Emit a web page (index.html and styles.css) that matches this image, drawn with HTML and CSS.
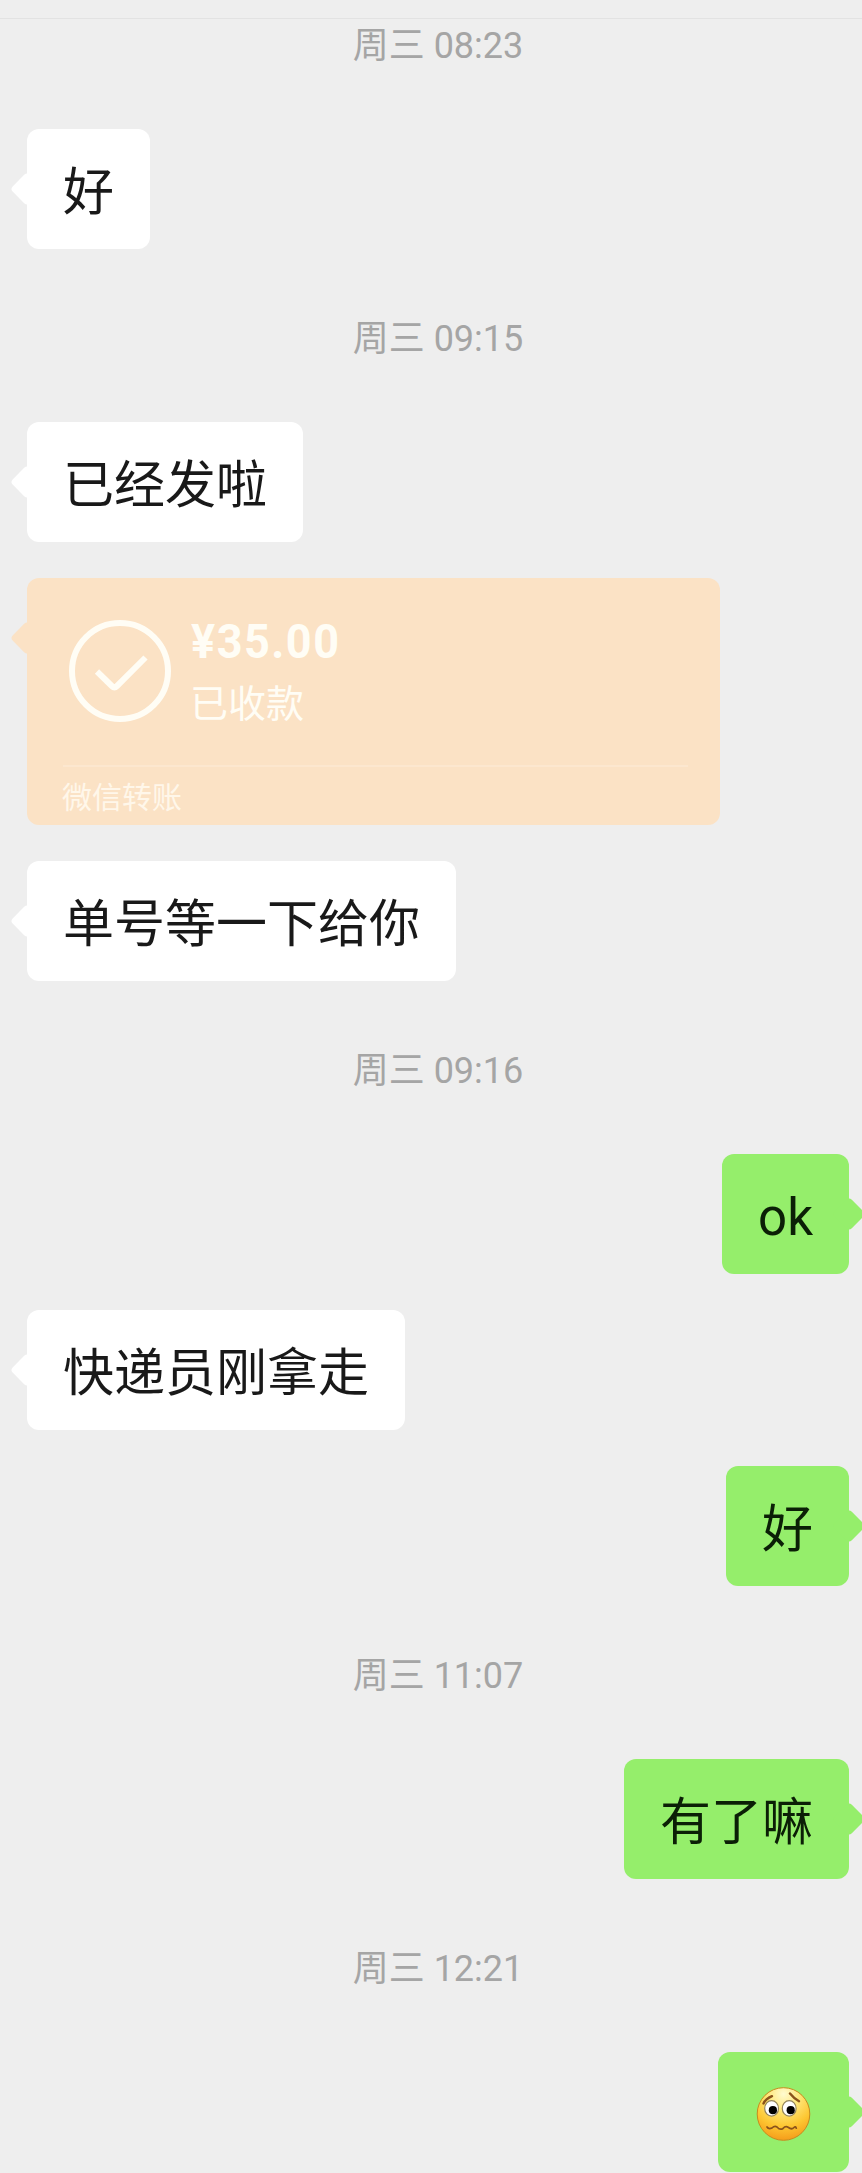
FILE: index.html
```html
<!DOCTYPE html>
<html lang="zh-CN">
<head>
<meta charset="utf-8">
<title>聊天</title>
<link rel="stylesheet" href="styles.css">
</head>
<body>
<header class="topbar"></header>
<main class="chat">
  <time class="stamp stamp-first">周三 08:23</time>
  <div class="bubble left">好</div>
  <time class="stamp">周三 09:15</time>
  <div class="bubble left">已经发啦</div>
  <section class="bubble left transfer">
    <div class="transfer-main">
      <svg class="check" viewBox="0 0 102 102" fill="none" stroke="currentColor">
        <circle cx="51" cy="51" r="48" stroke-width="6"/>
        <path d="M28 51.500 42.800 66Q45.400 68.500 48 66L76.500 37.500" stroke-width="6"/>
      </svg>
      <div class="transfer-info">
        <div class="amount">¥35.00</div>
        <div class="status">已收款</div>
      </div>
    </div>
    <div class="transfer-foot">微信转账</div>
  </section>
  <div class="bubble left">单号等一下给你</div>
  <time class="stamp">周三 09:16</time>
  <div class="bubble right">ok</div>
  <div class="bubble left">快递员刚拿走</div>
  <div class="bubble right">好</div>
  <time class="stamp">周三 11:07</time>
  <div class="bubble right">有了嘛</div>
  <time class="stamp">周三 12:21</time>
  <div class="bubble right">
    <svg class="emoji" viewBox="0 0 59 58">
      <defs>
        <radialGradient id="face" cx="50%" cy="12%" r="88%">
          <stop offset="0" stop-color="#fffbd0"/>
          <stop offset=".35" stop-color="#ffe677"/>
          <stop offset=".7" stop-color="#fdc631"/>
          <stop offset="1" stop-color="#f59c1b"/>
        </radialGradient>
      </defs>
      <circle cx="29.500" cy="29" r="26.300" fill="url(#face)" stroke="#c98a1e" stroke-width="1"/>
      <ellipse cx="17.600" cy="23.400" rx="6.900" ry="7.800" fill="#fff" stroke="#94845a" stroke-width="1.200"/>
      <ellipse cx="35.200" cy="23.400" rx="6.900" ry="7.800" fill="#fff" stroke="#94845a" stroke-width="1.200"/>
      <circle cx="18.900" cy="25.200" r="4.100" fill="#000"/>
      <circle cx="36.700" cy="25.200" r="4.100" fill="#000"/>
      <g fill="none" stroke="#8a531b" stroke-linecap="round">
        <path d="M9.500 18.500Q11.500 14 18 11.200M36 8.500Q39.500 13 45 16.200" stroke-width="2.400"/>
        <path d="M13 42Q14.500 44.500 18 43Q20.500 40.500 23 42Q26 45.500 29 43.500Q31.500 40.500 34.500 42.500Q37.500 45 40 42.500Q41.500 41 42.300 43.200" stroke-width="1.700"/>
      </g>
    </svg>
  </div>
</main>
</body>
</html>
```
FILE: styles.css
```css
* {
  box-sizing: border-box;
}

body {
  margin: 0;
  height: 2173px;
  overflow: hidden;
  background: #eee;
  font-family: Roboto, "Noto Sans CJK SC", sans-serif;
}

.topbar {
  height: 19px;
  border-bottom: 1px solid #e2e2e2;
}

.chat {
  display: flex;
  flex-direction: column;
  align-items: flex-start;
  padding: 5px 13px 0 27px;
}

.stamp {
  align-self: center;
  height: 42px;
  margin: 68px 0 63px;
  font-size: 36px;
  line-height: 44px;
  color: #a5a5a5;
  white-space: nowrap;
}

.stamp-first {
  margin-top: 0;
}

.bubble {
  position: relative;
  height: 120px;
  padding: 0 36px;
  border-radius: 12px;
  font-size: 51px;
  line-height: 127px;
  white-space: nowrap;
  color: #191919;
}

.bubble + .bubble {
  margin-top: 36px;
}

/* Rounded pointer on the bubble's edge */
.bubble::before {
  content: "";
  position: absolute;
  top: 48px;
  width: 24px;
  height: 24px;
  border-radius: 4px;
  background: inherit;
  transform: rotate(45deg);
}

.left {
  background: #fff;
}

.left::before {
  left: -12px;
}

.right {
  align-self: flex-end;
  background: #95ee6b;
  color: #0b1f06;
}

.right::before {
  right: -12px;
}

.transfer {
  width: 693px;
  height: 247px;
  line-height: normal;
  background: #fbe2c5;
  color: #fffdf5;
}

.transfer-main {
  display: flex;
  gap: 20px;
  height: 189px;
  padding: 42px 0 0 6px;
  border-bottom: 2px solid #fce7cf;
  margin-right: -4px;
}

.check {
  width: 102px;
  height: 102px;
}

.amount {
  height: 56px;
  font-size: 49px;
  font-weight: 700;
  line-height: 43px;
  letter-spacing: 1.6px;
  transform: scaleX(0.92);
  transform-origin: left;
}

.status {
  margin-left: -1px;
  font-size: 38px;
  line-height: 57px;
}

.transfer-foot {
  margin-left: -1px;
  font-size: 30px;
  line-height: 62px;
  color: #fff7ea;
}

.emoji {
  display: block;
  width: 59px;
  height: 58px;
  margin-top: 33px;
}
```
